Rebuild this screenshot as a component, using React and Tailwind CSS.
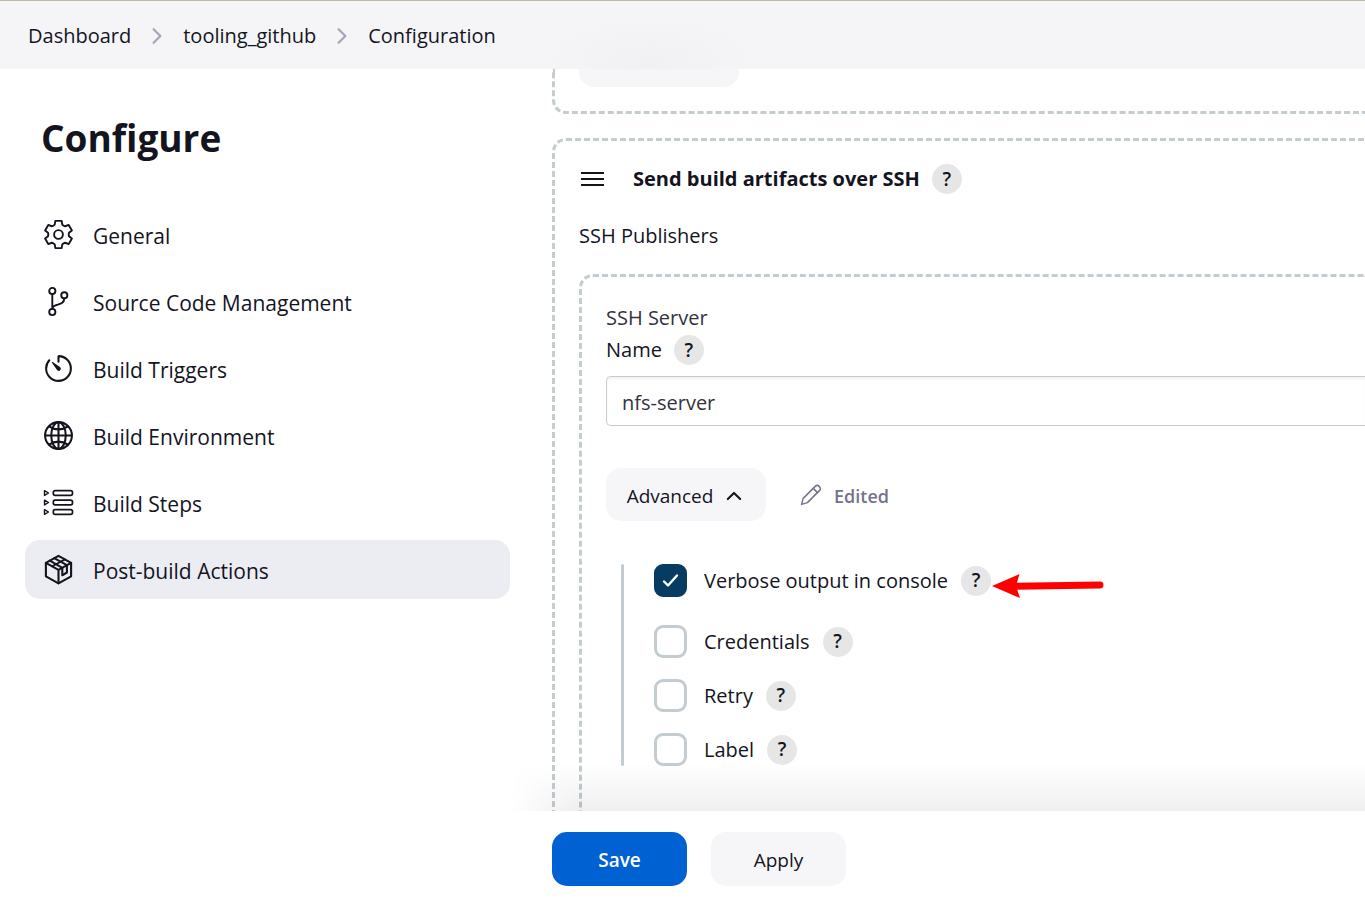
import React from "react";
import {
  IoTimerOutline,
  IoGlobeOutline,
  IoChevronForward,
  IoChevronUp,
} from "react-icons/io5";

const polar = (radius, degrees) => {
  const angle = (degrees * Math.PI) / 180;
  return `${(16.5 + radius * Math.cos(angle)).toFixed(2)} ${(16.5 + radius * Math.sin(angle)).toFixed(2)}`;
};

const gearPath =
  [0, 1, 2, 3, 4, 5]
    .map((tooth) => {
      const a = tooth * 60 - 90;
      return `${tooth === 0 ? "M" : "L"}${polar(10.6, a - 21)} L${polar(14, a - 13)} L${polar(14, a + 13)} L${polar(10.6, a + 21)} Q${polar(9.9, a + 30)} ${polar(10.6, a + 39)}`;
    })
    .join(" ") + " Z";

function GearIcon({ className }) {
  return (
    <svg viewBox="0 0 33 33" fill="none" stroke="currentColor" strokeWidth="1.9" strokeLinejoin="round" className={className} aria-hidden="true">
      <path d={gearPath} />
      <circle cx="16.5" cy="16.5" r="4.4" />
    </svg>
  );
}

function BranchIcon({ className }) {
  return (
    <svg viewBox="0 0 33 33" fill="none" stroke="currentColor" strokeWidth="1.9" strokeLinecap="round" className={className} aria-hidden="true">
      <circle cx="10.3" cy="6" r="3.1" />
      <circle cx="22.3" cy="10.3" r="3.1" />
      <circle cx="10.3" cy="27" r="3.1" />
      <path d="M10.3 9.1 V23.9 M22.3 13.4 C22 18.5 18.5 18.8 14.5 20 C12 20.8 10.3 21.8 10.3 23.9" />
    </svg>
  );
}

function StepsIcon({ className }) {
  return (
    <svg viewBox="-1.5 -1.5 33 33" fill="none" stroke="currentColor" strokeWidth="1.7" strokeLinejoin="round" className={className} aria-hidden="true">
      {[5.5, 15, 24.5].map((y) => (
        <g key={y}>
          <path d={`M1 ${y - 2.4} L5 ${y} L1 ${y + 2.4} Z`} strokeWidth="1.4" />
          <rect x="9.8" y={y - 2.4} width="19.2" height="4.8" rx="1.8" />
        </g>
      ))}
    </svg>
  );
}

function PackageIcon({ className }) {
  return (
    <svg viewBox="-1.5 -1.5 33 33" fill="none" stroke="currentColor" strokeWidth="2.1" strokeLinejoin="round" strokeLinecap="round" className={className} aria-hidden="true">
      <path d="M15 1.3 L27.6 8.3 V21.8 L15 28.9 L2.4 21.8 V8.3 Z" />
      <path d="M2.4 8.3 L15 15.3 L27.6 8.3 M15 15.3 V28.7" />
      <path d="M6.3 6.1 L18.8 13.4 V20.8 L23.4 18 V10.6 L10.7 3.7" />
      <path d="M8.7 11.7 L21.5 4.9" strokeWidth="1.8" />
    </svg>
  );
}

function PencilIcon({ className }) {
  return (
    <svg viewBox="0 0 22 22" fill="none" stroke="currentColor" strokeWidth="1.5" strokeLinejoin="round" strokeLinecap="round" className={className} aria-hidden="true">
      <path d="M1.6 20.4 L3.2 14.4 L15.2 2.4 C16.4 1.2 18 1.2 19.2 2.4 C20.6 3.8 20.6 5.4 19.4 6.6 L7.4 18.6 Z" />
      <path d="M13.3 4.4 L17.5 8.6" />
    </svg>
  );
}

const navItems = [
  { label: "General", Icon: GearIcon },
  { label: "Source Code Management", Icon: BranchIcon },
  { label: "Build Triggers", Icon: IoTimerOutline },
  { label: "Build Environment", Icon: IoGlobeOutline },
  { label: "Build Steps", Icon: StepsIcon },
  { label: "Post-build Actions", Icon: PackageIcon, active: true },
];

function Help({ topic }) {
  return (
    <button type="button" aria-label={`Help for ${topic}`} className="flex size-[30px] shrink-0 items-center justify-center rounded-full bg-[#e6e6e6] text-[19px] leading-none font-semibold">
      ?
    </button>
  );
}

function Option({ id, label, checked, children }) {
  return (
    <div className="flex items-center">
      <span className="relative flex size-[33px] shrink-0">
        <input
          id={id}
          type="checkbox"
          defaultChecked={checked}
          className="peer size-full appearance-none rounded-[9px] border-3 border-[#c3ccd1] bg-white checked:border-[#063c62] checked:bg-[#063c62]"
        />
        <svg viewBox="0 0 33 33" fill="none" stroke="white" strokeWidth="2.4" strokeLinecap="round" strokeLinejoin="round" className="pointer-events-none absolute inset-0 hidden peer-checked:block" aria-hidden="true">
          <path d="M10 17.5 L14 21.5 L23 11.5" />
        </svg>
      </span>
      <label htmlFor={id} className="mr-[13px] ml-[17px] font-medium">{label}</label>
      <span className="relative">
        <Help topic={label} />
        {children}
      </span>
    </div>
  );
}

function Arrow() {
  return (
    <svg viewBox="0 0 112 26" className="pointer-events-none absolute top-[7px] left-[31px] h-[26px] w-[112px]" aria-hidden="true">
      <path d="M24 13.2 L108 12" stroke="#ff0000" strokeWidth="7" strokeLinecap="round" />
      <path d="M0 13 L27.5 1 L24 13 L28 25 Z" fill="#ff0000" />
    </svg>
  );
}

export default function App() {
  return (
    <div className="flex h-screen flex-col overflow-hidden bg-white font-['Open_Sans','Noto_Sans',sans-serif] text-[20px] leading-8 text-[#14141f]">
      <header className="flex h-[69px] shrink-0 items-center border-t border-[#c2b8a3] bg-[#f5f5f8] bg-[radial-gradient(ellipse_110px_45px_at_650px_60px,#f1f1f4,#f5f5f8)] px-7 pt-0.5">
        <nav aria-label="Breadcrumb" className="flex items-center gap-[14px] font-medium">
          <a href="#dashboard">Dashboard</a>
          <IoChevronForward className="size-6 text-[#a5a5b8]" />
          <a href="#project">tooling_github</a>
          <IoChevronForward className="size-6 text-[#a5a5b8]" />
          <a href="#configuration">Configuration</a>
        </nav>
      </header>

      <div className="flex min-h-0 flex-1">
        <aside className="w-[510px] shrink-0 pl-[25px]">
          <h1 className="mt-11 ml-4 text-[37px] leading-[50px] font-bold">Configure</h1>
          <nav aria-label="Sections" className="mt-[42px] flex flex-col gap-2">
            {navItems.map(({ label, Icon, active }) => (
              <a
                key={label}
                href={`#${label}`}
                aria-current={active ? "true" : undefined}
                className={`flex h-[59px] items-center gap-[18px] rounded-[15px] px-[17px] text-[21px] font-medium ${active ? "bg-[#ecedf3]" : ""}`}
              >
                <Icon className="size-[33px] shrink-0" />
                <span className="pt-0.5">{label}</span>
              </a>
            ))}
          </nav>
        </aside>

        <main className="flex min-w-0 flex-1 flex-col">
          <div className="relative min-h-0 flex-1 overflow-hidden pl-[42px]">
            <div className="rounded-bl-[14px] border-b-3 border-l-3 border-dashed border-[#c3ccd1] pb-6 pl-6">
              <div className="h-[18px] w-40 rounded-b-[15px] bg-[#f6f6f9]" />
            </div>

            <section className="mt-6 rounded-tl-[14px] border-t-3 border-l-3 border-dashed border-[#c3ccd1] pt-[22px] pl-6">
              <div className="flex items-center">
                <svg viewBox="0 0 27 18" stroke="currentColor" strokeWidth="2" className="h-[18px] w-[27px]" aria-hidden="true">
                  <path d="M2 3 H25 M2 9 H25 M2 15 H25" />
                </svg>
                <h2 className="mr-3 ml-[27px] font-bold">Send build artifacts over SSH</h2>
                <Help topic="Send build artifacts over SSH" />
              </div>
              <h3 className="mt-[25px] font-medium">SSH Publishers</h3>

              <div className="mt-[22px] h-[640px] rounded-tl-[14px] border-t-3 border-l-3 border-dashed border-[#c3ccd1] pt-[25px] pl-6">
                <div className="text-[#33333d]">SSH Server</div>
                <div className="flex items-center gap-3">
                  <label htmlFor="server" className="font-medium">Name</label>
                  <Help topic="Name" />
                </div>
                <input
                  id="server"
                  defaultValue="nfs-server"
                  className="mt-[10px] block h-[50px] w-full rounded-l-[5px] border border-r-0 border-[#c3ccd1] px-[15px] pt-0.5 text-[#33333d] shadow-[inset_0_2px_2px_#0000000d]"
                />
                <div className="mt-[42px] flex items-center">
                  <button type="button" className="flex h-[53px] w-40 items-center justify-center gap-[10px] rounded-[15px] bg-[#f6f6f9] pt-0.5 text-[19px] font-medium">
                    Advanced
                    <IoChevronUp className="size-[22px]" />
                  </button>
                  <span className="ml-[34px] flex items-center gap-3 text-[18px] font-semibold text-[#73738c]">
                    <PencilIcon className="size-[22px]" />
                    <span className="pt-0.5">Edited</span>
                  </span>
                </div>
                <div className="mt-[43px] ml-[15px] flex gap-[30px]">
                  <div className="w-[3px] rounded-full bg-[#c3ccd1]" />
                  <div className="flex flex-col gap-[21px]">
                    <div className="mb-[7px]">
                      <Option id="verbose" label="Verbose output in console" checked>
                        <Arrow />
                      </Option>
                    </div>
                    <Option id="credentials" label="Credentials" />
                    <Option id="retry" label="Retry" />
                    <Option id="label" label="Label" />
                  </div>
                </div>
              </div>
            </section>
            <div className="pointer-events-none absolute right-0 bottom-0 left-0 h-12 bg-linear-to-t from-black/6 to-transparent [mask-image:linear-gradient(to_right,transparent,black_64px)]" />
          </div>

          <footer className="flex shrink-0 gap-6 pt-[21px] pb-[19px] pl-[42px] text-[19px]">
            <button type="button" className="h-[54px] w-[135px] rounded-[15px] bg-[#0061d3] pt-0.5 font-semibold text-white">Save</button>
            <button type="button" className="h-[54px] w-[135px] rounded-[15px] bg-[#f6f6f9] pt-0.5 font-medium">Apply</button>
          </footer>
        </main>
      </div>
    </div>
  );
}
